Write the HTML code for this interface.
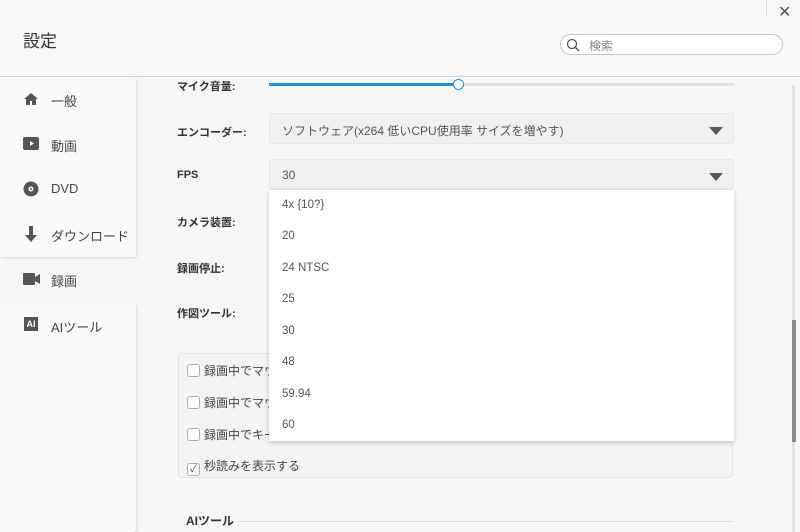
<!DOCTYPE html><html><head><meta charset="utf-8"><style>
*{margin:0;padding:0;box-sizing:border-box}
body{width:800px;height:532px;overflow:hidden;background:#f7f7f8;font-family:"Liberation Sans","Noto Sans CJK JP",sans-serif;position:relative;color:#333}
.abs{position:absolute}
.hdr{left:0;top:0;width:800px;height:77px;background:#f8f8f9;border-bottom:1px solid #d4d4d6}
.card{background:#fafafa;box-shadow:1px 1px 3px rgba(0,0,0,.12);border-radius:0 3px 3px 0}
.nav{font-size:13px;color:#444}
.lbl{font-size:11px;font-weight:bold;color:#333}
.sel{left:269px;width:465px;height:31px;background:#f0f0f1;border:1px solid #e8e8e9;border-radius:3px;font-size:12px;color:#555;padding:8px 12px}
.tri{position:absolute;right:10px;top:13px;width:0;height:0;border-left:7px solid transparent;border-right:7px solid transparent;border-top:8px solid #555}
.dd{left:269px;top:190px;width:465px;height:251px;background:#fff;box-shadow:0 2px 5px rgba(0,0,0,.2)}
.dd div{position:absolute;left:13px;font-size:11.5px;color:#555}
.cb{font-size:12px;color:#444}
.box{display:inline-block;width:13px;height:13px;border:1px solid #aaa;border-radius:3px;background:#fff;vertical-align:-2px;margin-right:4px}
</style></head><body>
<div class="abs hdr"></div>
<div class="abs" style="left:23px;top:27px;font-size:17px;color:#333">設定</div>
<div class="abs" style="left:778px;top:2px;font-size:16px;color:#555">✕</div>
<div class="abs" style="left:766px;top:0;width:1px;height:16px;background:#ddd"></div>
<div class="abs" style="left:560px;top:34px;width:223px;height:21px;border:1px solid #c8c8ca;border-radius:11px;background:#fff"></div>
<svg class="abs" style="left:566px;top:38px" width="14" height="14"><circle cx="6" cy="6" r="4.5" fill="none" stroke="#555" stroke-width="1.3"/><path d="M9.5 9.5 13 13" stroke="#555" stroke-width="1.4"/></svg>
<div class="abs" style="left:589px;top:37px;font-size:12px;color:#888">検索</div>
<div class="abs card" style="left:0;top:78px;width:136px;height:179px"></div>
<div class="abs card" style="left:0;top:303px;width:136px;height:229px"></div>
<svg class="abs" style="left:23px;top:92px" width="16" height="14"><path d="M8 1 1 7h2v6h4V9h2v4h4V7h2z" fill="#555"/></svg>
<div class="abs nav" style="left:51px;top:91px">一般</div>
<svg class="abs" style="left:23px;top:137px" width="16" height="13"><rect width="16" height="13" rx="2" fill="#555"/><path d="M7 4v5l4-2.5z" fill="#fff"/></svg>
<div class="abs nav" style="left:51px;top:136px">動画</div>
<svg class="abs" style="left:23px;top:181px" width="16" height="16"><circle cx="8" cy="8" r="7.5" fill="#555"/><circle cx="8" cy="8" r="2.5" fill="#fff"/><circle cx="8" cy="8" r="1" fill="#555"/></svg>
<div class="abs nav" style="left:51px;top:181px">DVD</div>
<svg class="abs" style="left:24px;top:226px" width="14" height="16"><path d="M5 0h4v9h4l-6 7-6-7h4z" fill="#555"/></svg>
<div class="abs nav" style="left:51px;top:226px">ダウンロード</div>
<svg class="abs" style="left:23px;top:273px" width="17" height="12"><rect width="12" height="12" rx="1" fill="#555"/><path d="M12 4l5-3v10l-5-3z" fill="#555"/></svg>
<div class="abs nav" style="left:51px;top:271px">録画</div>
<div class="abs" style="left:24px;top:317px;width:14px;height:14px;background:#555;color:#fff;font-size:9px;font-weight:bold;text-align:center;line-height:14px">AI</div>
<div class="abs nav" style="left:51px;top:317px">AIツール</div>
<div class="abs lbl" style="left:177px;top:78px">マイク音量:</div>
<div class="abs" style="left:269px;top:83px;width:465px;height:3px;background:#e4e4e6"></div>
<div class="abs" style="left:269px;top:83px;width:190px;height:3px;background:#1e90e0"></div>
<div class="abs" style="left:453px;top:79px;width:11px;height:11px;border-radius:50%;background:#fff;border:1px solid #1e90e0"></div>
<div class="abs lbl" style="left:177px;top:124px">エンコーダー:</div>
<div class="abs sel" style="top:113px">ソフトウェア(x264 低いCPU使用率 サイズを増やす)<span class="tri"></span></div>
<div class="abs lbl" style="left:177px;top:169px">FPS</div>
<div class="abs sel" style="top:159px">30<span class="tri"></span></div>
<div class="abs lbl" style="left:177px;top:214px">カメラ装置:</div>
<div class="abs lbl" style="left:177px;top:260px">録画停止:</div>
<div class="abs lbl" style="left:177px;top:305px">作図ツール:</div>
<div class="abs" style="left:178px;top:353px;width:555px;height:125px;border:1px solid #e4e4e6;border-radius:4px;background:#f4f4f5"></div>
<div class="abs cb" style="left:187px;top:362px"><span class="box"></span>録画中でマウ</div>
<div class="abs cb" style="left:187px;top:394px"><span class="box"></span>録画中でマウ</div>
<div class="abs cb" style="left:187px;top:426px"><span class="box"></span>録画中でキー</div>
<div class="abs cb" style="left:187px;top:457px"><span class="box" style="font-size:10px;line-height:11px;text-align:center">✓</span>秒読みを表示する</div>
<div class="dd abs">
<div style="top:9px">4x {10?}</div><div style="top:40px">20</div><div style="top:72px">24 NTSC</div><div style="top:103px">25</div><div style="top:135px">30</div><div style="top:166px">48</div><div style="top:198px">59.94</div><div style="top:229px">60</div>
</div>
<div class="abs" style="left:186px;top:512px;font-size:12px;font-weight:bold;color:#333">AIツール</div>
<div class="abs" style="left:238px;top:521px;width:495px;height:1px;background:#ddd"></div>
<div class="abs" style="left:792px;top:85px;width:3px;height:447px;background:#e2e2e4"></div>
<div class="abs" style="left:792px;top:320px;width:4px;height:122px;background:#888"></div>
</body></html>
